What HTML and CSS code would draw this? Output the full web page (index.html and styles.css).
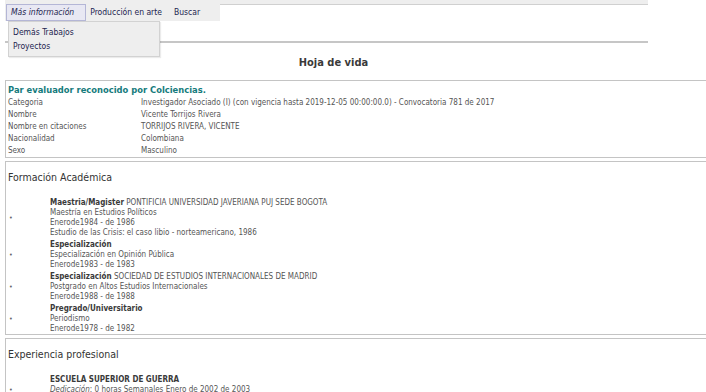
FILE: index.html
```html
<!DOCTYPE html>
<html lang="es">
<head>
    <meta charset="UTF-8">
    <title>Hoja de vida</title>
    <link rel="stylesheet" href="styles.css">
</head>
<body>
    <div class="header">
        <ul class="menu">
            <li class="active">Más información</li>
            <li>Producción en arte</li>
            <li>Buscar</li>
        </ul>
        <div class="menu-rest"></div>
        <div class="submenu">
            <a href="#">Demás Trabajos</a>
            <a href="#">Proyectos</a>
        </div>
    </div>
    <div class="rule"></div>

    <h1 class="title">Hoja de vida</h1>

    <div class="box">
        <h3 class="par">Par evaluador reconocido por Colciencias.</h3>
        <table class="datos">
            <tr><td>Categoria</td><td>Investigador Asociado (I) (con vigencia hasta 2019-12-05 00:00:00.0) - Convocatoria 781 de 2017</td></tr>
            <tr><td>Nombre</td><td>Vicente Torrijos Rivera</td></tr>
            <tr><td>Nombre en citaciones</td><td>TORRIJOS RIVERA, VICENTE</td></tr>
            <tr><td>Nacionalidad</td><td>Colombiana</td></tr>
            <tr><td>Sexo</td><td>Masculino</td></tr>
        </table>
    </div>

    <div class="box">
        <h3 class="section">Formación Académica</h3>
        <ul class="items">
            <li>
                <span class="dot">•</span>
                <div>
                    <b>Maestria/Magister</b> PONTIFICIA UNIVERSIDAD JAVERIANA PUJ SEDE BOGOTA<br>
                    Maestría en Estudios Políticos<br>
                    Enerode1984 - de 1986<br>
                    Estudio de las Crisis: el caso libio - norteamericano, 1986
                </div>
            </li>
            <li>
                <span class="dot">•</span>
                <div>
                    <b>Especialización</b><br>
                    Especialización en Opinión Pública<br>
                    Enerode1983 - de 1983
                </div>
            </li>
            <li>
                <span class="dot">•</span>
                <div>
                    <b>Especialización</b> SOCIEDAD DE ESTUDIOS INTERNACIONALES DE MADRID<br>
                    Postgrado en Altos Estudios Internacionales<br>
                    Enerode1988 - de 1988
                </div>
            </li>
            <li>
                <span class="dot">•</span>
                <div>
                    <b>Pregrado/Universitario</b><br>
                    Periodismo<br>
                    Enerode1978 - de 1982
                </div>
            </li>
        </ul>
    </div>

    <div class="box">
        <h3 class="section">Experiencia profesional</h3>
        <ul class="items">
            <li>
                <span class="dot">•</span>
                <div>
                    <b>ESCUELA SUPERIOR DE GUERRA</b><br>
                    <i>Dedicación</i>: 0 horas Semanales Enero de 2002 de 2003<br>
                    &nbsp;
                </div>
            </li>
        </ul>
    </div>
</body>
</html>
```

FILE: styles.css
```css
html {
    overflow: hidden;
}
body {
    margin: 0;
    font-family: "DejaVu Sans Condensed", "DejaVu Sans", sans-serif;
    font-size: 8px;
    color: #555;
    background: #fff;
}
.header {
    position: relative;
    display: flex;
    margin-left: 5px;
    width: 643px;
}
.menu {
    display: flex;
    list-style: none;
    margin: 0;
    padding: 4px 12px 0 1px;
    height: 17px;
    background: #eee;
}
.menu li {
    padding: 0 7px 0 3px;
    line-height: 15px;
    font-size: 8.5px;
    color: #1d2550;
    border: 1px solid transparent;
}
.menu li.active {
    font-style: italic;
    background: #e8e8f3;
    border-color: #b4b6d6;
    padding: 0 11px 0 4px;
}
.menu-rest {
    flex: 1;
    height: 4px;
    background: #eee;
    border-bottom: 1px solid #d0d0d0;
}
.submenu {
    position: absolute;
    left: 3px;
    top: 21px;
    width: 146px;
    padding: 3px 0 3px 4px;
    background: #eee;
    border: 1px solid #d2d2d2;
    box-shadow: 1px 1px 1px rgba(0, 0, 0, 0.08);
    z-index: 2;
}
.submenu a {
    display: block;
    line-height: 14px;
    font-size: 8.5px;
    color: #1d2550;
    text-decoration: none;
}
.rule {
    margin: 20px 0 0 5px;
    width: 643px;
    height: 0;
    border-top: 2px solid #c6c6c6;
}
.title {
    margin: 13px 0 0 5px;
    width: 657px;
    text-align: center;
    font-size: 11px;
    line-height: 14px;
    color: #3a3a3a;
}
.box {
    margin: 10px 0 0 5px;
    border: 1px solid #c4c4c4;
    border-right: none;
    padding: 0 0 0 2px;
}
.box + .box {
    margin-top: 3px;
}
.par {
    margin: 1px 0 0;
    font-size: 9.3px;
    line-height: 15px;
    color: #157b7c;
}
.datos {
    border-collapse: collapse;
}
.datos td {
    padding: 0;
    line-height: 12px;
    vertical-align: top;
}
.datos td:first-child {
    width: 133px;
}
.section {
    margin: 8px 0 0;
    font-size: 10.5px;
    line-height: 14px;
    font-weight: normal;
    color: #333;
}
.items {
    list-style: none;
    margin: 14px 0 0;
    padding: 0;
}
.items li {
    display: flex;
    align-items: center;
    margin-bottom: 2px;
    line-height: 10px;
}
.items li:last-child {
    margin-bottom: 0;
}
.items .dot {
    width: 41px;
    padding-left: 1px;
    font-size: 7px;
    color: #666;
}
.items b {
    color: #3a3a3a;
}
.items i {
    color: #555;
}
```
